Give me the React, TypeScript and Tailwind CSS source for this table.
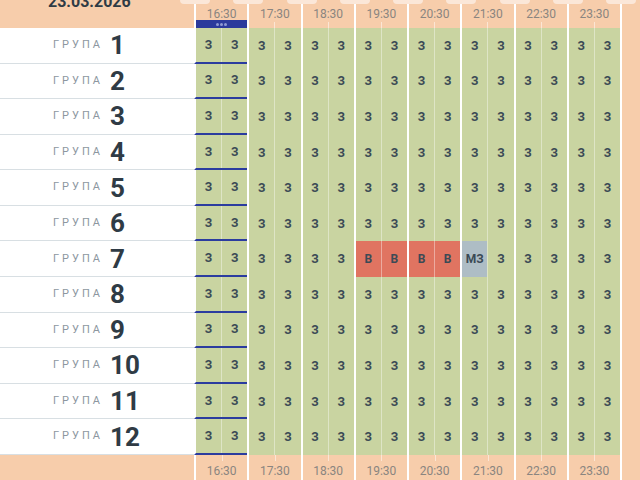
import React from 'react';

type Slot = 'З' | 'В' | 'МЗ';

const HOURS = ['16:30', '17:30', '18:30', '19:30', '20:30', '21:30', '22:30', '23:30'];

const slotBg: Record<Slot, string> = {
  'З': 'bg-[#c9d4a1]',
  'В': 'bg-[#e07461]',
  'МЗ': 'bg-[#aebdc5]',
};

const makeRow = (n: number): Slot[] => {
  const slots: Slot[] = Array(16).fill('З');
  if (n === 7) {
    slots[6] = 'В';
    slots[7] = 'В';
    slots[8] = 'В';
    slots[9] = 'В';
    slots[10] = 'МЗ';
  }
  return slots;
};

const groups = Array.from({ length: 12 }, (_, i) => ({ n: i + 1, slots: makeRow(i + 1) }));

const Tab = () => (
  <div className="absolute top-0 -left-[16px] w-[30px] h-[4px] rounded-b-[4px] bg-[#fbe7d8] z-10" />
);

const HeaderRow: React.FC = () => (
  <div className="flex h-[28px] shrink-0">
    <div className="w-[194px] overflow-hidden">
      <div className="pl-[48px] -mt-[6.5px] text-[16px] leading-none font-bold text-[#2f3b45]">23.03.2026</div>
    </div>
    {HOURS.map((h, i) => (
      <div key={h} className="relative w-[53.25px] border-l-2 border-white flex flex-col">
        <Tab />
        <div className="pt-[8px] text-[12px] leading-[12px] text-center text-[#8a8580]">{h}</div>
        {i === 0 ? (
          <div className="mt-auto h-[8.5px] bg-[#2b3a9c] flex items-center justify-center gap-[1px]">
            <span className="w-[3px] h-[3px] rounded-full bg-[#8e9ad4]" />
            <span className="w-[3px] h-[3px] rounded-full bg-[#8e9ad4]" />
            <span className="w-[3px] h-[3px] rounded-full bg-[#8e9ad4]" />
          </div>
        ) : (
          <div className="mt-auto mx-auto w-px h-[6px] bg-white/50" />
        )}
      </div>
    ))}
    <div className="relative flex-1 border-l-2 border-white">
      <Tab />
    </div>
  </div>
);

const GroupRow: React.FC<{ n: number; slots: Slot[] }> = ({ n, slots }) => (
  <div className="flex h-[35.58px] shrink-0">
    <div className="w-[194px] bg-white border-b border-[#d8dfe3] flex items-center pl-[53px]">
      <span className="w-[57px] text-[11px] tracking-[3px] text-[#8d979f]">ГРУПА</span>
      <span className="text-[26px] leading-none font-bold text-[#2f3b45]">{n}</span>
    </div>
    {HOURS.map((h, i) => (
      <div
        key={h}
        className={`w-[53.25px] border-l-2 border-white flex ${i === 0 ? 'border-b-2 border-b-[#2b3c9f]' : ''}`}
      >
        {[0, 1].map((k) => {
          const s = slots[i * 2 + k];
          return (
            <div
              key={k}
              className={`flex-1 flex items-center justify-center text-[12px] font-bold text-[#3b4a55] ${slotBg[s]} ${
                k === 1 ? 'border-l border-white/40' : ''
              }`}
            >
              {s}
            </div>
          );
        })}
      </div>
    ))}
    <div className="flex-1 border-l-2 border-white" />
  </div>
);

const FooterRow: React.FC = () => (
  <div className="flex flex-1">
    <div className="w-[194px]" />
    {HOURS.map((h) => (
      <div key={h} className="relative w-[53.25px] border-l-2 border-white">
        <div className="absolute top-0 left-1/2 w-px h-[6px] bg-white/50" />
        <div className="pt-[10px] text-[12px] leading-[12px] text-center text-[#8a8580]">{h}</div>
      </div>
    ))}
    <div className="flex-1 border-l-2 border-white" />
  </div>
);

export default function App() {
  return (
    <div className="w-[640px] h-[480px] overflow-hidden flex flex-col bg-[#f7cdab] font-['Roboto',sans-serif]">
      <HeaderRow />
      {groups.map((g) => (
        <GroupRow key={g.n} n={g.n} slots={g.slots} />
      ))}
      <FooterRow />
    </div>
  );
}
